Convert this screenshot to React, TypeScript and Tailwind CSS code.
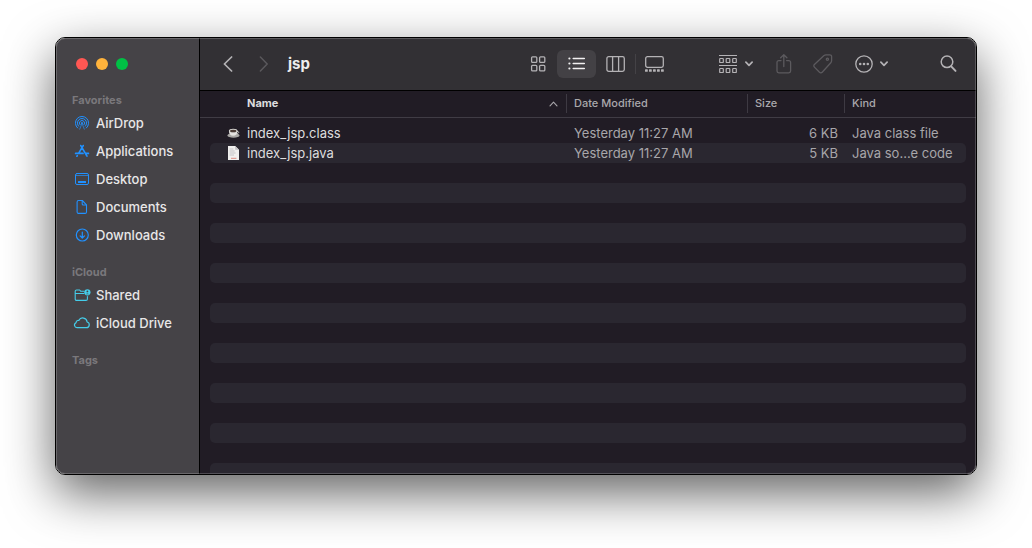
import type { ReactNode } from "react";

const stroke = {
  fill: "none",
  stroke: "currentColor",
  strokeLinecap: "round" as const,
  strokeLinejoin: "round" as const,
};

function AirDropIcon() {
  return (
    <svg width="16" height="16" viewBox="0 0 16 16" {...stroke} strokeWidth="1">
      <path d="M3.6 13A6.6 6.6 0 1 1 12.4 13" />
      <path d="M4.6 11.2A4.6 4.6 0 1 1 11.4 11.2" />
      <path d="M6 9.8A2.6 2.6 0 1 1 10 9.8" />
      <path d="M8 8.4L5.7 14.2M8 8.4L10.3 14.2" strokeWidth="0.7" />
      <circle cx="8" cy="8" r="0.9" fill="currentColor" stroke="none" />
    </svg>
  );
}

function ApplicationsIcon() {
  return (
    <svg width="16" height="16" viewBox="0 0 16 16" {...stroke} strokeWidth="1.7">
      <path d="M9.2 2.6L4.6 10.4M6.8 2.6L13 13.1M1.6 10.4H9M12 10.4H14.4M3.3 12.6L2.9 13.2" />
    </svg>
  );
}

function DesktopIcon() {
  return (
    <svg width="16" height="16" viewBox="0 0 16 16" {...stroke} strokeWidth="1">
      <rect x="1.5" y="2.5" width="13" height="11" rx="1.5" />
      <path d="M2 4.5H14" strokeOpacity="0.7" />
      <rect x="4" y="10" width="8" height="2" rx="0.5" fill="currentColor" stroke="none" />
    </svg>
  );
}

function DocumentIcon() {
  return (
    <svg width="16" height="16" viewBox="0 0 16 16" {...stroke} strokeWidth="1.1">
      <path d="M4.5 1.5H8.3L12.5 5.8V13A1.4 1.4 0 0 1 11.1 14.4H4.5A1.4 1.4 0 0 1 3.1 13V2.9A1.4 1.4 0 0 1 4.5 1.5Z" />
      <path d="M8.2 1.8V5A1 1 0 0 0 9.2 6H12.3" />
    </svg>
  );
}

function DownloadIcon() {
  return (
    <svg width="16" height="16" viewBox="0 0 16 16" {...stroke} strokeWidth="1.2">
      <circle cx="8.3" cy="8" r="6" />
      <path d="M8.3 5V10.8M6.1 8.8L8.3 11L10.5 8.8" />
    </svg>
  );
}

function SharedIcon() {
  return (
    <svg width="18" height="16" viewBox="0 0 18 16" {...stroke} strokeWidth="1.1">
      <path d="M11.2 4.2H7.6L6.6 3H3.6A1.4 1.4 0 0 0 2.2 4.4V12A1.4 1.4 0 0 0 3.6 13.4H13A1.4 1.4 0 0 0 14.4 12V9.6" />
      <path d="M2.4 6.5H11" />
      <circle cx="14.4" cy="5.3" r="3.1" fill="currentColor" stroke="none" />
      <circle cx="14.4" cy="4.4" r="0.9" fill="#454347" stroke="none" />
      <path d="M12.9 7.3C13.3 6.1 15.5 6.1 15.9 7.3Z" fill="#454347" stroke="none" />
    </svg>
  );
}

function CloudIcon() {
  return (
    <svg width="18" height="16" viewBox="0 0 18 16" {...stroke} strokeWidth="1.2">
      <path d="M4.3 12.7H13.5A2.9 2.9 0 0 0 14.1 7A4.4 4.4 0 0 0 5.8 5.4A2.3 2.3 0 0 0 3.1 7.7A2.6 2.6 0 0 0 4.3 12.7Z" />
    </svg>
  );
}

function ChevronDown() {
  return (
    <svg width="8" height="6" viewBox="0 0 8 6" {...stroke} strokeWidth="1.7">
      <path d="M0.9 1.2L4 4.3L7.1 1.2" />
    </svg>
  );
}

function GridIcon() {
  return (
    <svg width="16" height="16" viewBox="0 0 16 16" {...stroke} strokeWidth="1.3">
      <rect x="1.6" y="0.8" width="5.2" height="5.6" rx="1" />
      <rect x="9.6" y="0.8" width="5.2" height="5.6" rx="1" />
      <rect x="1.6" y="9.3" width="5.2" height="5.6" rx="1" />
      <rect x="9.6" y="9.3" width="5.2" height="5.6" rx="1" />
    </svg>
  );
}

function ListIcon() {
  return (
    <svg width="18" height="16" viewBox="0 0 18 16" {...stroke} strokeWidth="1.5">
      <path d="M5.2 2.5H16.3M5.2 7.5H16.3M5.2 12.5H16.3" />
      <g fill="currentColor" stroke="none">
        <circle cx="1.4" cy="2.5" r="1.1" />
        <circle cx="1.4" cy="7.5" r="1.1" />
        <circle cx="1.4" cy="12.5" r="1.1" />
      </g>
    </svg>
  );
}

function ColumnsIcon() {
  return (
    <svg width="19" height="16" viewBox="0 0 19 16" {...stroke} strokeWidth="1.3">
      <rect x="0.9" y="0.7" width="17.4" height="14.6" rx="1.8" />
      <path d="M6.6 1V15M12.6 1V15" />
    </svg>
  );
}

function GalleryIcon() {
  return (
    <svg width="19" height="16" viewBox="0 0 19 16" {...stroke} strokeWidth="1.3">
      <rect x="0.7" y="0.7" width="17.6" height="10.6" rx="1.8" />
      <g fill="currentColor" stroke="none">
        <rect x="0" y="13.2" width="2.8" height="2.6" rx="0.6" />
        <rect x="4" y="13.2" width="2.8" height="2.6" rx="0.6" />
        <rect x="8" y="13.2" width="2.8" height="2.6" rx="0.6" />
        <rect x="12" y="13.2" width="2.8" height="2.6" rx="0.6" />
        <rect x="16" y="13.2" width="2.8" height="2.6" rx="0.6" />
      </g>
    </svg>
  );
}

function GroupIcon() {
  return (
    <svg width="18" height="20" viewBox="0 0 18 20" {...stroke} strokeWidth="1.2">
      <path d="M0.5 1.5H17.5M0.5 11.5H17.5" />
      <rect x="0.7" y="4.5" width="3.6" height="4" rx="0.6" />
      <rect x="7.2" y="4.5" width="3.6" height="4" rx="0.6" />
      <rect x="13.7" y="4.5" width="3.6" height="4" rx="0.6" />
      <rect x="0.7" y="14.5" width="3.6" height="4" rx="0.6" />
      <rect x="7.2" y="14.5" width="3.6" height="4" rx="0.6" />
      <rect x="13.7" y="14.5" width="3.6" height="4" rx="0.6" />
    </svg>
  );
}

function ShareIcon() {
  return (
    <svg width="16" height="20" viewBox="0 0 16 20" {...stroke} strokeWidth="1.3">
      <path d="M5 6.6H2.8A1.8 1.8 0 0 0 1 8.4V17A1.8 1.8 0 0 0 2.8 18.8H12.8A1.8 1.8 0 0 0 14.6 17V8.4A1.8 1.8 0 0 0 12.8 6.6H10.6" />
      <path d="M7.8 12.5V1M4.7 3.8L7.8 0.8L10.9 3.8" />
    </svg>
  );
}

function TagIcon() {
  return (
    <svg width="20" height="20" viewBox="0 0 20 20" {...stroke} strokeWidth="1.3">
      <path d="M11 1.6C11.5 1 12.2 0.8 13 0.8H16.8A1.8 1.8 0 0 1 18.6 2.6V6.6C18.6 7.4 18.4 8.2 17.8 8.8L9.2 18.2A1.9 1.9 0 0 1 6.5 18.3L1.4 13.1A1.9 1.9 0 0 1 1.4 10.4Z" />
      <circle cx="14.4" cy="5.2" r="1.1" />
    </svg>
  );
}

function MoreIcon() {
  return (
    <svg width="18" height="18" viewBox="0 0 18 18" {...stroke} strokeWidth="1.3">
      <circle cx="9" cy="9" r="8.2" />
      <g fill="currentColor" stroke="none">
        <circle cx="5.2" cy="9" r="1.3" />
        <circle cx="9" cy="9" r="1.3" />
        <circle cx="12.8" cy="9" r="1.3" />
      </g>
    </svg>
  );
}

function SearchIcon() {
  return (
    <svg width="17" height="18" viewBox="0 0 17 18" {...stroke}>
      <circle cx="7" cy="6.8" r="5.8" strokeWidth="1.5" />
      <path d="M11.2 11.4L15.5 15.9" strokeWidth="2" />
    </svg>
  );
}

function CupIcon() {
  return (
    <svg width="13" height="14" viewBox="0 0 13 14">
      <ellipse cx="6.5" cy="9.4" rx="6" ry="2.3" fill="#a9a7a5" />
      <path d="M10 5.4C12.4 5.2 12.2 7.6 9.4 7.8" fill="none" stroke="#c8c6c3" strokeWidth="1" />
      <path d="M1.9 4.8C1.9 8 3.6 9.8 6.2 9.8S10.5 8 10.5 4.8Z" fill="#e4e2e0" />
      <ellipse cx="6.2" cy="4.8" rx="4.3" ry="2" fill="#d3d1ce" />
      <ellipse cx="6.2" cy="5" rx="3.2" ry="1.3" fill="#4a3a34" />
    </svg>
  );
}

function SourceFileIcon() {
  return (
    <svg width="13" height="14" viewBox="0 0 13 14">
      <path d="M1 0H8.2L12 3.8V14H1Z" fill="#f0efee" />
      <path d="M8.2 0L12 3.8H8.2Z" fill="#c3c1c4" />
      <path d="M2.6 3H6.4M2.6 5H7.6M2.6 7H8.6M2.6 9H7" stroke="#b3b1b4" strokeWidth="0.7" />
      <path d="M4 12.3H9.4" stroke="#d98a80" strokeWidth="1" />
    </svg>
  );
}

type Place = { label: string; icon: ReactNode };

const favorites: Place[] = [
  { label: "AirDrop", icon: <AirDropIcon /> },
  { label: "Applications", icon: <ApplicationsIcon /> },
  { label: "Desktop", icon: <DesktopIcon /> },
  { label: "Documents", icon: <DocumentIcon /> },
  { label: "Downloads", icon: <DownloadIcon /> },
];

const cloud: Place[] = [
  { label: "Shared", icon: <SharedIcon /> },
  { label: "iCloud Drive", icon: <CloudIcon /> },
];

const files = [
  { name: "index_jsp.class", icon: <CupIcon />, date: "Yesterday 11:27 AM", size: "6 KB", kind: "Java class file" },
  { name: "index_jsp.java", icon: <SourceFileIcon />, date: "Yesterday 11:27 AM", size: "5 KB", kind: "Java so...e code" },
];

const fillerRows = Array.from({ length: 16 }, (_, i) => i);

function Section({ title, places = [], tint = "" }: { title: string; places?: Place[]; tint?: string }) {
  return (
    <section className="mb-[14px]">
      <h2 className="text-[11px] leading-[18px] font-bold text-[#7a787c]">{title}</h2>
      <ul>
        {places.map((place) => (
          <li key={place.label}>
            <a href="#" className="flex h-7 items-center gap-1 text-[13px] leading-5 font-medium text-[#e8e7e8]">
              <span className={`flex w-5 justify-center ${tint}`}>{place.icon}</span>
              {place.label}
            </a>
          </li>
        ))}
      </ul>
    </section>
  );
}

function Sidebar() {
  return (
    <aside className="w-36 shrink-0 border-r border-black bg-[#454347] pl-4">
      <div className="mb-px flex h-[52px] items-center gap-2 pl-1">
        <button aria-label="Close" className="size-3 rounded-full bg-[#ff5753]" />
        <button aria-label="Minimize" className="size-3 rounded-full bg-[#ffb33c]" />
        <button aria-label="Zoom" className="size-3 rounded-full bg-[#00c145]" />
      </div>
      <nav>
        <Section title="Favorites" places={favorites} tint="text-[#2191ff]" />
        <Section title="iCloud" places={cloud} tint="text-[#45cdea]" />
        <Section title="Tags" />
      </nav>
    </aside>
  );
}

function Toolbar() {
  const view = "flex h-7 w-[39px] items-center justify-center rounded-md";
  return (
    <header className="flex h-[53px] shrink-0 items-center border-b border-black bg-[#323034] pl-[10px] pr-[19px] text-[#b4b2b5]">
      <button aria-label="Back" className="flex h-7 w-9 items-center justify-center">
        <svg width="10" height="16" viewBox="0 0 10 16" {...stroke} strokeWidth="1.7">
          <path d="M8.6 1L1.4 8L8.6 15" />
        </svg>
      </button>
      <button aria-label="Forward" disabled className="flex h-7 w-9 items-center justify-center text-[#5a585c]">
        <svg width="10" height="16" viewBox="0 0 10 16" {...stroke} strokeWidth="1.5">
          <path d="M1.4 1L8.2 8L1.4 15" />
        </svg>
      </button>
      <h1 className="ml-[6px] text-[15px] leading-6 font-bold text-[#eeedee]">jsp</h1>

      <div className="ml-auto flex items-center">
        <button aria-label="Icon view" className={view}><GridIcon /></button>
        <button aria-label="List view" aria-pressed="true" className={`${view} bg-[#434145] text-[#f2f1f2]`}><ListIcon /></button>
        <button aria-label="Column view" className={view}><ColumnsIcon /></button>
        <span className="h-5 w-px bg-[#444246]" />
        <button aria-label="Gallery view" className="flex h-7 w-[37px] items-center justify-center"><GalleryIcon /></button>
      </div>
      <button aria-label="Group items" className="ml-[46px] flex h-7 items-center gap-2"><GroupIcon /><ChevronDown /></button>
      <button aria-label="Share" disabled className="ml-[11px] flex h-7 w-[39px] items-center justify-center text-[#5c5a5e]"><ShareIcon /></button>
      <button aria-label="Edit tags" disabled className="flex h-7 w-[39px] items-center justify-center text-[#5c5a5e]"><TagIcon /></button>
      <button aria-label="More actions" className="ml-[13px] flex h-7 items-center gap-[7px]"><MoreIcon /><ChevronDown /></button>
      <button aria-label="Search" className="ml-[52px] flex h-7 items-center"><SearchIcon /></button>
    </header>
  );
}

function FileTable() {
  const head = "h-8 p-0 pt-[3px] align-top font-medium";
  const divided = "flex h-[19px] items-center border-l border-[#3e3a43] pl-[7px]";
  return (
    <div className="min-h-0 flex-1 overflow-hidden bg-[#211c25] bg-[linear-gradient(#403c45,#403c45)] bg-[length:100%_1px] bg-[position:0_26px] bg-no-repeat px-[10px]">
      <table className="w-full table-fixed border-collapse text-left">
        <colgroup>
          <col />
          <col className="w-[181px]" />
          <col className="w-[97px]" />
          <col className="w-[122px]" />
        </colgroup>
        <thead className="text-[11px] text-[#aaa8ac]">
          <tr>
            <th className={head} aria-sort="ascending">
              <div className="flex h-[19px] items-center justify-between pl-[37px] pr-2 font-bold text-[#dddcde]">
                Name
                <svg width="9" height="6" viewBox="0 0 9 6" {...stroke} strokeWidth="1.1" className="text-[#aaa8ac]">
                  <path d="M1 4.8L4.5 1.2L8 4.8" />
                </svg>
              </div>
            </th>
            <th className={head}><div className={divided}>Date Modified</div></th>
            <th className={head}><div className={divided}>Size</div></th>
            <th className={head}><div className={divided}>Kind</div></th>
          </tr>
        </thead>
        <tbody className="text-[13px] leading-5 text-[#a8a6aa]">
          {files.map((file) => (
            <tr key={file.name} className="group h-5">
              <td className="rounded-l-[5px] p-0 text-[#dddcde] group-even:bg-[#2a2730]">
                <div className="flex items-center gap-[7px] pl-[17px]">{file.icon}{file.name}</div>
              </td>
              <td className="p-0 pl-2 group-even:bg-[#2a2730]">{file.date}</td>
              <td className="p-0 pr-[6px] text-right group-even:bg-[#2a2730]">{file.size}</td>
              <td className="rounded-r-[5px] p-0 pl-2 whitespace-nowrap group-even:bg-[#2a2730]">{file.kind}</td>
            </tr>
          ))}
          {fillerRows.map((row) => (
            <tr key={row} aria-hidden="true" className="group h-5">
              <td colSpan={4} className="rounded-[5px] p-0 group-even:bg-[#2a2730]" />
            </tr>
          ))}
        </tbody>
      </table>
    </div>
  );
}

export default function App() {
  return (
    <div className="flex h-screen bg-white px-[55px] pt-[37px] pb-[73px] font-['Inter',sans-serif]">
      <div className="relative flex min-w-0 flex-1 overflow-hidden rounded-[10px] border border-black shadow-[0_18px_50px_rgba(0,0,0,0.62)]">
        <Sidebar />
        <main className="flex min-w-0 flex-1 flex-col">
          <Toolbar />
          <FileTable />
        </main>
        <div className="pointer-events-none absolute inset-0 rounded-[9px] border border-white/20" />
      </div>
    </div>
  );
}
